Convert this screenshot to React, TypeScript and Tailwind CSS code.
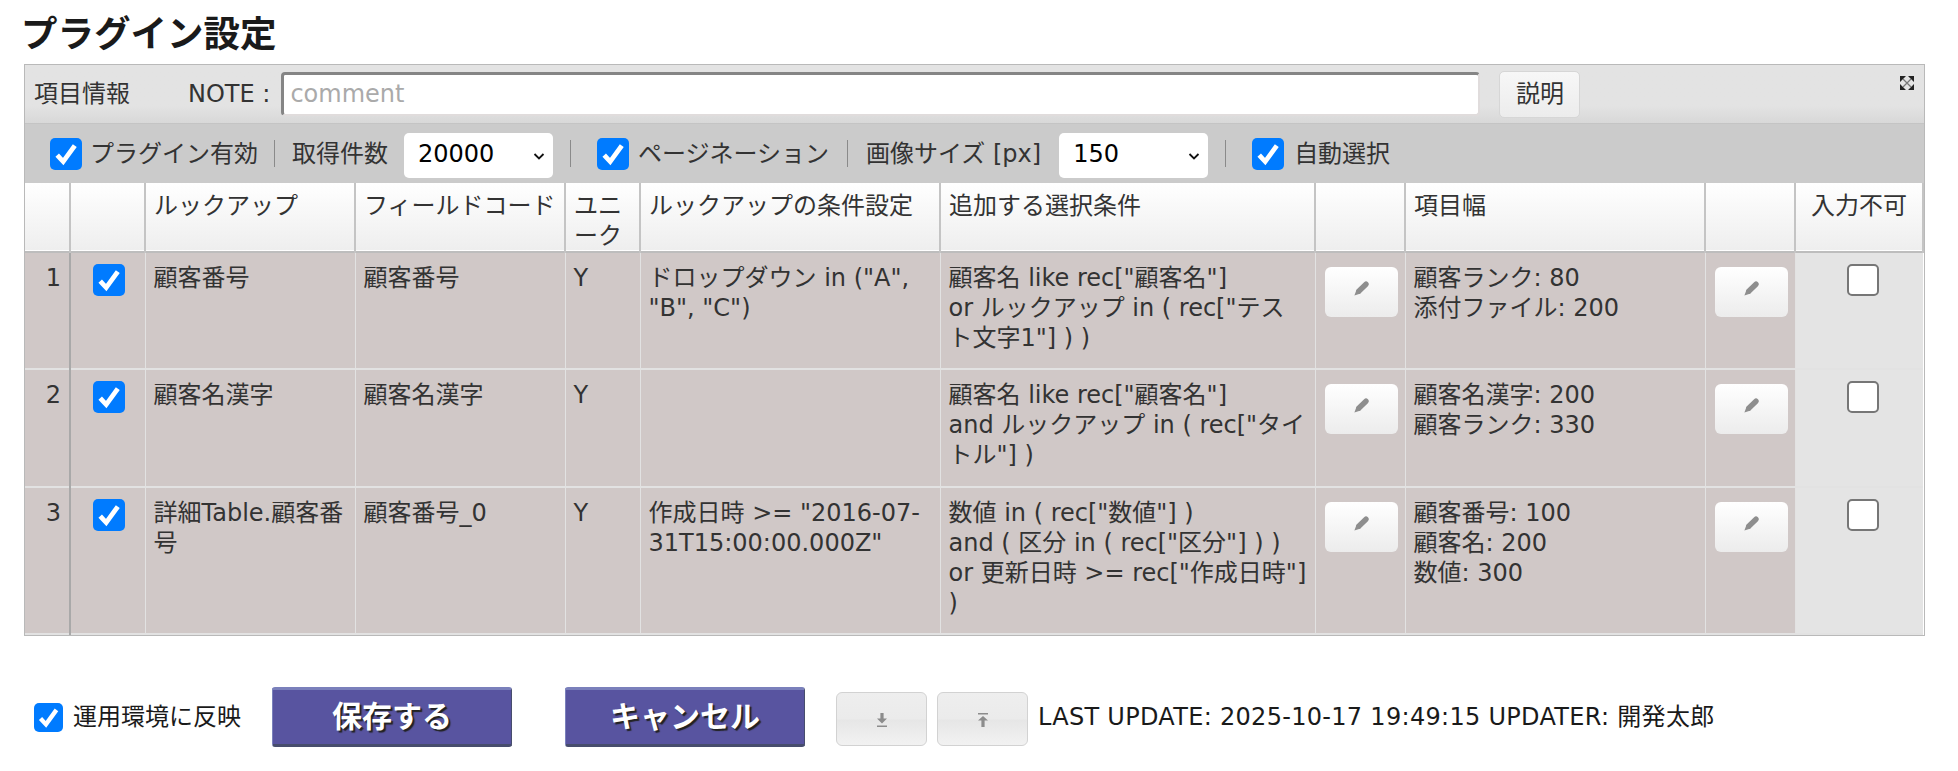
const FONT = "font-['DejaVu_Sans','Noto_Sans_CJK_JP',sans-serif]";

type Row = {
  no: number;
  lookup: string;
  field: string;
  cond: string;
  extra: string[];
  widths: string[];
  h: string;
};

const rows: Row[] = [
  {
    no: 1,
    lookup: "顧客番号",
    field: "顧客番号",
    cond: 'ドロップダウン in ("A", "B", "C")',
    extra: ['顧客名 like rec["顧客名"]', 'or ルックアップ in ( rec["テス', 'ト文字1"] ) )'],
    widths: ["顧客ランク: 80", "添付ファイル: 200"],
    h: "h-[117px]",
  },
  {
    no: 2,
    lookup: "顧客名漢字",
    field: "顧客名漢字",
    cond: "",
    extra: ['顧客名 like rec["顧客名"]', 'and ルックアップ in ( rec["タイ', 'トル"] )'],
    widths: ["顧客名漢字: 200", "顧客ランク: 330"],
    h: "h-[118px]",
  },
  {
    no: 3,
    lookup: "詳細Table.顧客番号",
    field: "顧客番号_0",
    cond: '作成日時 >= "2016-07-31T15:00:00.000Z"',
    extra: ['数値 in ( rec["数値"] )', 'and ( 区分 in ( rec["区分"] ) )', 'or 更新日時 >= rec["作成日時"]', ")"],
    widths: ["顧客番号: 100", "顧客名: 200", "数値: 300"],
    h: "h-[147px]",
  },
];

function Check({ checked = true, small = false }: { checked?: boolean; small?: boolean }) {
  const size = small ? "w-[29px] h-[29px]" : "w-[32px] h-[32px]";
  if (!checked) {
    return <span className={`inline-block shrink-0 rounded-[5px] border-2 border-[#767676] bg-white ${size}`} />;
  }
  return (
    <span className={`inline-flex shrink-0 items-center justify-center rounded-[5px] bg-[#007bff] ${size}`}>
      <svg viewBox="0 0 16 16" className="h-full w-full">
        <path d="M3.6 8.6 L6.6 11.8 L12.4 3.8" fill="none" stroke="#fff" strokeWidth="2.4" />
      </svg>
    </span>
  );
}

function Sep({ ml }: { ml: string }) {
  return <span className={`block h-[27px] w-px shrink-0 bg-[#8a8a8a] ${ml}`} />;
}

function FakeSelect({ value, ml }: { value: string; ml: string }) {
  return (
    <span
      className={`mt-[4px] flex h-[45px] w-[149px] shrink-0 items-center justify-between rounded-[5px] bg-white pb-[3px] pl-[14px] pr-[6px] text-black ${ml}`}
    >
      {value}
      <svg viewBox="0 0 16 16" className="mt-[3px] h-[16px] w-[16px]">
        <path d="M3.5 6 L8 10.5 L12.5 6" fill="none" stroke="#111" strokeWidth="1.8" />
      </svg>
    </span>
  );
}

function Pencil() {
  return (
    <svg viewBox="0 0 18 18" className="h-[18px] w-[18px]">
      <path d="M7 11 L14 4.2" fill="none" stroke="#8e8e8e" strokeWidth="5.4" strokeLinecap="round" />
      <path d="M4.6 9.4 L8.6 13.4 L2.4 15.6 Z" fill="#8e8e8e" />
    </svg>
  );
}

function EditButton() {
  return (
    <span className="flex h-[50px] w-[73px] items-start justify-center rounded-[6px] bg-gradient-to-b from-white to-[#ececec] pt-[13px]">
      <Pencil />
    </span>
  );
}

function IconButton({ up = false }: { up?: boolean }) {
  return (
    <span className="flex h-[54px] w-[91px] items-center justify-center rounded-[6px] border border-[#d2d2d2] bg-[linear-gradient(#eeeeee_0%,#ebebeb_50%,#e6e6e6_52%,#f2f2f2_100%)] pt-[2px]">
      <svg viewBox="0 0 12 14" className="h-[14px] w-[12px]">
        {up ? (
          <path d="M1 0 H11 V1.4 H1 Z M6 3 L11 7.6 H7.6 V14 H4.4 V7.6 H1 Z" fill="#8c8c8c" />
        ) : (
          <path d="M1 12.6 H11 V14 H1 Z M4.4 0 H7.6 V5.4 H11 L6 10.4 L1 5.4 H4.4 Z" fill="#8c8c8c" />
        )}
      </svg>
    </span>
  );
}

function PurpleButton({ label, ml }: { label: string; ml: string }) {
  return (
    <button
      className={`h-[60px] w-[240px] shrink-0 rounded-[3px] border-t-[3px] border-b-[3px] border-l border-r border-t-[#7a80bb] border-b-[#474d6d] border-l-[#7a80bb] border-r-[#474d6d] bg-[#5854a0] text-[30px] font-bold text-white [text-shadow:2px_2px_1px_#222] ${ml}`}
    >
      {label}
    </button>
  );
}

const th = "border-r-2 border-[#c4c4c4] pt-[8px] align-top font-normal text-[#333]";
const thText = `${th} px-[8px] text-left`;
const td = "border-r border-[#e2e2e2] px-[8px] pt-[10px] align-top";

export default function App() {
  return (
    <div className={`${FONT} h-[771px] w-[1958px] bg-white text-[24px] leading-[30px] text-[#333]`}>
      <h1 className="pl-[21px] pt-[14px] text-[36.5px] leading-[42px] font-bold text-[#1a1a1a]">プラグイン設定</h1>

      <div className="relative mx-[24px] mt-[8px] w-[1901px] border border-[#b9b9b9]">
        <div className="flex h-[59px] items-center border-b border-[#c4c4c4] bg-gradient-to-b from-[#e3e3e3] from-70% to-[#d8d8d8] pl-[9px]">
          <span>項目情報</span>
          <span className="ml-[58px] text-[#333]">NOTE :</span>
          <input
            placeholder="comment"
            className="ml-[11px] mb-[1px] h-[44px] w-[1199px] rounded-[4px] border-t-[3px] border-l-[3px] border-r-[2px] border-b-[2px] border-t-[#858585] border-l-[#858585] border-r-[#e0dcdc] border-b-[#e0dcdc] bg-white px-[6px] placeholder:text-[#aaa]"
          />
          <span className="ml-[19px] flex h-[47px] w-[81px] items-center justify-center rounded-[5px] border border-[#d6d6d6] bg-gradient-to-b from-[#f7f7f7] to-[#ececec]">
            説明
          </span>
          <svg viewBox="0 0 16 16" className="absolute right-[9px] top-[10px] h-[16px] w-[16px]">
            <path d="M1 7 V1 H7 Z M15 7 V1 H9 Z M1 9 V15 H7 Z M15 9 V15 H9 Z" fill="#222" />
            <path d="M4 4 L12 12 M12 4 L4 12" stroke="#777" strokeWidth="1.2" />
          </svg>
        </div>

        <div className="flex h-[59px] items-center bg-[#cbcbcb] pl-[25px]">
          <Check />
          <span className="ml-[8px]">プラグイン有効</span>
          <Sep ml="ml-[16px]" />
          <span className="ml-[17px]">取得件数</span>
          <FakeSelect value="20000" ml="ml-[16px]" />
          <Sep ml="ml-[17px]" />
          <span className="ml-[26px] inline-flex"><Check /></span>
          <span className="ml-[9px]">ページネーション</span>
          <Sep ml="ml-[18px]" />
          <span className="ml-[18px]">画像サイズ [px]</span>
          <FakeSelect value="150" ml="ml-[18px]" />
          <Sep ml="ml-[17px]" />
          <span className="ml-[26px] inline-flex"><Check /></span>
          <span className="ml-[10px]">自動選択</span>
        </div>

        <table className="w-full table-fixed border-collapse">
          <thead>
            <tr className="h-[69px] border-b-2 border-[#bdbdbd] bg-gradient-to-b from-white to-[#eeeeee]">
              <th className={`${thText} w-[45px]`} />
              <th className={`${thText} w-[75px]`} />
              <th className={`${thText} w-[210px]`}>ルックアップ</th>
              <th className={`${thText} w-[210px]`}>フィールドコード</th>
              <th className={`${thText} w-[75px]`}>ユニーク</th>
              <th className={`${thText} w-[300px]`}>ルックアップの条件設定</th>
              <th className={`${thText} w-[375px]`}>追加する選択条件</th>
              <th className={`${thText} w-[90px]`} />
              <th className={`${thText} w-[300px]`}>項目幅</th>
              <th className={`${thText} w-[90px]`} />
              <th className={`${th} text-center`}>入力不可</th>
            </tr>
          </thead>
          <tbody>
            {rows.map((r) => (
              <tr key={r.no} className={`${r.h} border-b-2 border-[#e2e2e2] bg-[#d0c8c7]`}>
                <td className="border-r-2 border-[#a9a9a9] pr-[8px] pt-[10px] text-right align-top">{r.no}</td>
                <td className="border-r border-[#e2e2e2] pl-[2px] pt-[11px] text-center align-top">
                  <span className="inline-flex"><Check /></span>
                </td>
                <td className={td}>{r.lookup}</td>
                <td className={td}>{r.field}</td>
                <td className={td}>Y</td>
                <td className={td}>{r.cond}</td>
                <td className={`${td} whitespace-nowrap`}>
                  {r.extra.map((line) => (
                    <div key={line}>{line}</div>
                  ))}
                </td>
                <td className="border-r border-[#e2e2e2] pl-[9px] pt-[14px] align-top">
                  <EditButton />
                </td>
                <td className={td}>
                  {r.widths.map((line) => (
                    <div key={line}>{line}</div>
                  ))}
                </td>
                <td className="border-r border-[#e2e2e2] pl-[9px] pt-[14px] align-top">
                  <EditButton />
                </td>
                <td className="bg-[#e4e4e4] pl-[8px] pt-[11px] text-center align-top">
                  <span className="inline-flex"><Check checked={false} /></span>
                </td>
              </tr>
            ))}
          </tbody>
        </table>
      </div>

      <div className="mt-[51px] flex items-center pl-[34px]">
        <Check small />
        <span className="ml-[10px] w-[190px] text-[#1a1a1a]">運用環境に反映</span>
        <PurpleButton label="保存する" ml="ml-[9px]" />
        <PurpleButton label="キャンセル" ml="ml-[53px]" />
        <span className="ml-[31px] mt-[3px]"><IconButton /></span>
        <span className="ml-[10px] mt-[3px]"><IconButton up /></span>
        <span className="ml-[10px] tracking-[0.3px] text-[#1a1a1a]">LAST UPDATE: 2025-10-17 19:49:15 UPDATER: 開発太郎</span>
      </div>
    </div>
  );
}
